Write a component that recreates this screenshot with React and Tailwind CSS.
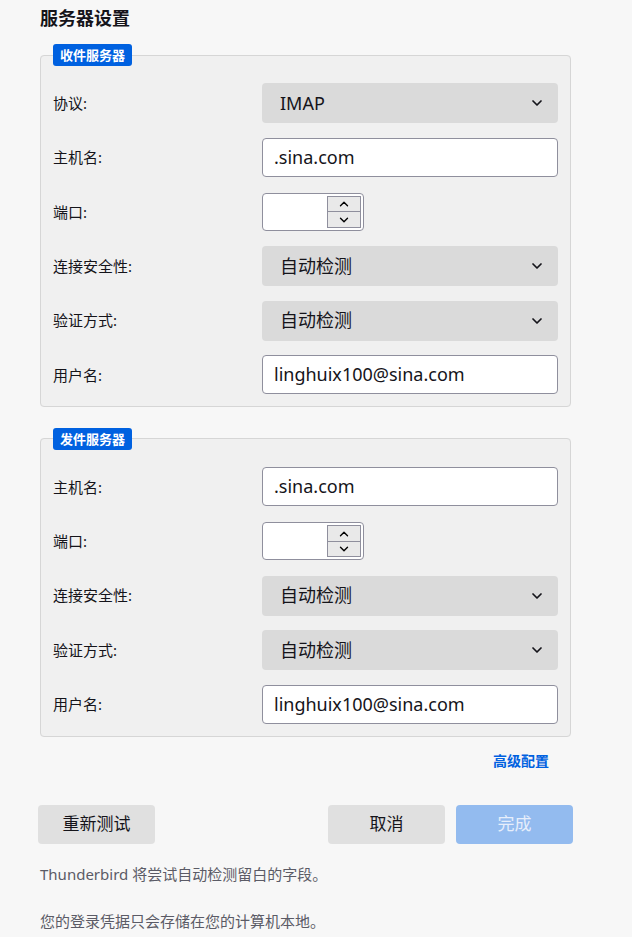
import React from 'react';
import { ChevronDown, ChevronUp } from 'lucide-react';

const FONT = "font-['Noto_Sans','Noto_Sans_CJK_SC',sans-serif]";

const Select = ({ value }) => (
  <div className="flex h-[40px] w-[296px] items-center justify-between rounded-[4px] bg-[#dadada] pl-[18px] pr-[13px] text-[18px] text-[#15141a]">
    <span>{value}</span>
    <ChevronDown size={16} strokeWidth={2.6} className="text-[#15141a]" />
  </div>
);

const TextInput = ({ value }) => (
  <div className="flex h-[39px] w-[296px] items-center rounded-[4px] border border-[#8f8f9d] bg-white px-[11px] text-[18px] text-[#15141a]">
    {value}
  </div>
);

const PortInput = () => (
  <div className="flex h-[38px] w-[102px] items-stretch rounded-[4px] border border-[#8f8f9d] bg-white">
    <div className="flex-1" />
    <div className="my-[2px] mr-[2px] flex w-[34px] flex-col border border-[#8f8f9d] bg-[#e9e9e9]">
      <div className="flex flex-1 items-center justify-center border-b border-[#8f8f9d]">
        <ChevronUp size={14} strokeWidth={2.4} />
      </div>
      <div className="flex flex-1 items-center justify-center">
        <ChevronDown size={14} strokeWidth={2.4} />
      </div>
    </div>
  </div>
);

const Row = ({ label, children }) => (
  <div className="flex h-[40px] items-center">
    <div className="w-[209px] text-[15px] text-[#15141a]">{label}</div>
    {children}
  </div>
);

const ServerBox = ({ title, children }) => (
  <fieldset className="m-0 rounded-[4px] border border-[#d6d6d6] bg-[#f0f0f0] px-3 pb-[11px] pt-[17px]">
    <legend className="ml-0 rounded-[3px] bg-[#0061e0] px-[7px] text-[13px] font-bold leading-[22px] text-white">
      {title}
    </legend>
    <div className="flex flex-col gap-[14.4px]">{children}</div>
  </fieldset>
);

export default function App() {
  return (
    <div className={`min-h-[937px] w-[632px] bg-[#f7f7f7] pl-10 pr-[62px] pt-[5px] ${FONT}`}>
      <h1 className="text-[18px] font-bold leading-[26px] text-[#15141a]">服务器设置</h1>

      <div className="mt-[13px]">
        <ServerBox title="收件服务器">
          <Row label="协议:"><Select value="IMAP" /></Row>
          <Row label="主机名:"><TextInput value=".sina.com" /></Row>
          <Row label="端口:"><PortInput /></Row>
          <Row label="连接安全性:"><Select value="自动检测" /></Row>
          <Row label="验证方式:"><Select value="自动检测" /></Row>
          <Row label="用户名:"><TextInput value="linghuix100@sina.com" /></Row>
        </ServerBox>
      </div>

      <div className="mt-[21px]">
        <ServerBox title="发件服务器">
          <Row label="主机名:"><TextInput value=".sina.com" /></Row>
          <Row label="端口:"><PortInput /></Row>
          <Row label="连接安全性:"><Select value="自动检测" /></Row>
          <Row label="验证方式:"><Select value="自动检测" /></Row>
          <Row label="用户名:"><TextInput value="linghuix100@sina.com" /></Row>
        </ServerBox>
      </div>

      <div className="mt-[14px] flex justify-end pr-[21px]">
        <span className="text-[14px] font-bold leading-[20px] text-[#0061e0]">高级配置</span>
      </div>

      <div className="-ml-0.5 -mr-[3px] mt-[34px] flex items-center">
        <button type="button" className="h-[39px] w-[117px] rounded-[4px] bg-[#e0e0e0] text-[17px] text-[#15141a]">
          重新测试
        </button>
        <div className="flex-1" />
        <button type="button" className="h-[39px] w-[117px] rounded-[4px] bg-[#e0e0e0] text-[17px] text-[#15141a]">
          取消
        </button>
        <button type="button" className="ml-[11px] h-[39px] w-[117px] rounded-[4px] bg-[#93bbef] text-[17px] text-[#e6eefb]">
          完成
        </button>
      </div>

      <p className="mt-[19px] text-[15px] leading-[22px] text-[#5b5b66]">Thunderbird 将尝试自动检测留白的字段。</p>
      <p className="mt-[25px] text-[15px] leading-[22px] text-[#5b5b66]">您的登录凭据只会存储在您的计算机本地。</p>
    </div>
  );
}
